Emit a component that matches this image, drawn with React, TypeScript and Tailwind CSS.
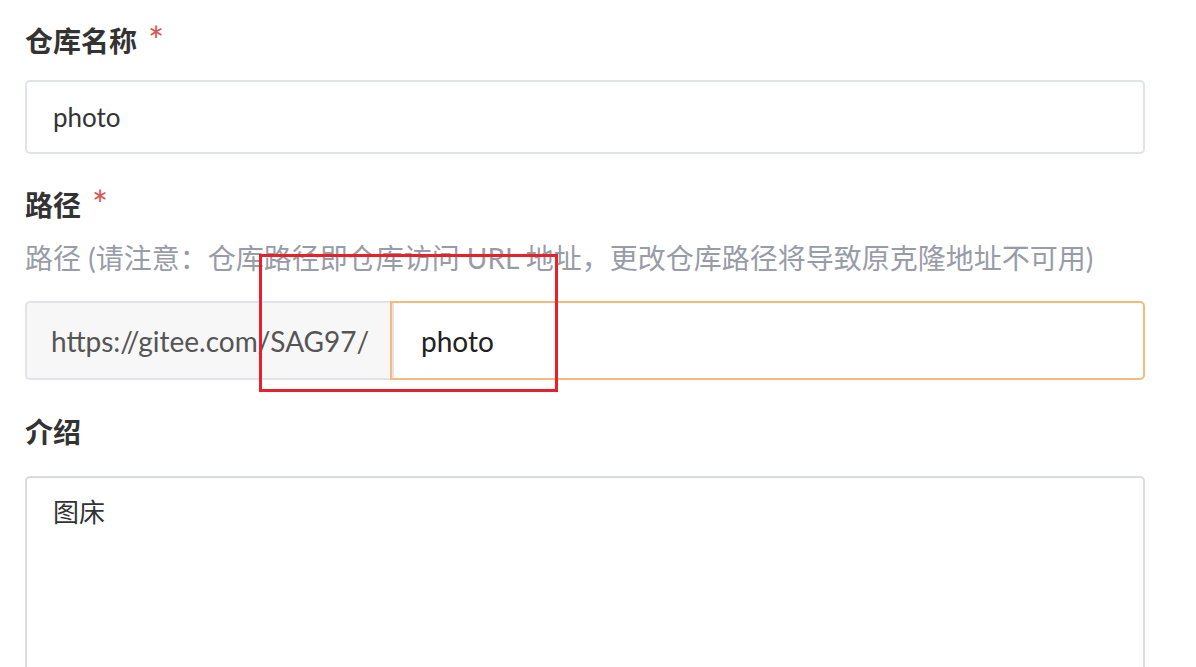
import React from "react";

const font = "font-['Lato','Noto_Sans_CJK_SC',sans-serif]";

function Label({ text, required }: { text: string; required?: boolean }) {
  return (
    <div className="flex h-[40px] items-center text-[28px] font-bold leading-[40px] text-[#333]">
      <span>{text}</span>
      {required && (
        <span className="ml-[11px] self-start text-[38px] leading-[38px] font-normal text-[#d9534f]">
          *
        </span>
      )}
    </div>
  );
}

export default function App() {
  return (
    <div className={`relative min-h-[667px] bg-white ${font}`}>
      <div className="w-[1145px] pl-[25px] pt-[21px]">
        {/* 仓库名称 */}
        <Label text="仓库名称" required />
        <div className="mt-[19px] flex h-[74px] items-center rounded-[5px] border-2 border-[#e0e3e9] px-[26px] text-[26px] text-[#333]">
          photo
        </div>

        {/* 路径 */}
        <div className="mt-[31px]">
          <Label text="路径" required />
        </div>
        <div className="mt-[13px] h-[40px] text-[28px] leading-[40px] text-[#989ca7] whitespace-nowrap">
          路径 (请注意：仓库路径即仓库访问 URL 地址，更改仓库路径将导致原克隆地址不可用)
        </div>
        <div className="mt-[23px] flex h-[79px] text-[28px]">
          <div className="flex w-[365px] items-center rounded-l-[5px] border-2 border-r-0 border-[#e0e3e9] bg-[#f7f7f7] pl-[24px] text-[#555] whitespace-nowrap">
            https://gitee.com/SAG97/
          </div>
          <div className="flex flex-1 items-center rounded-r-[5px] border-2 border-[#f5b97c] pl-[29px] text-[#222] shadow-[inset_2px_0_0_#e0e3e9]">
            photo
          </div>
        </div>

        {/* 介绍 */}
        <div className="mt-[32px]">
          <Label text="介绍" />
        </div>
        <div className="mt-[24px] h-[300px] rounded-[5px] border-2 border-[#d8dbe1] px-[26px] pt-[16px] text-[26px] leading-[36px] text-[#333]">
          图床
        </div>
      </div>

      {/* annotation box */}
      <div className="pointer-events-none absolute left-[259px] top-[254px] h-[138px] w-[299px] border-[3px] border-[#e8202a]" />
    </div>
  );
}
